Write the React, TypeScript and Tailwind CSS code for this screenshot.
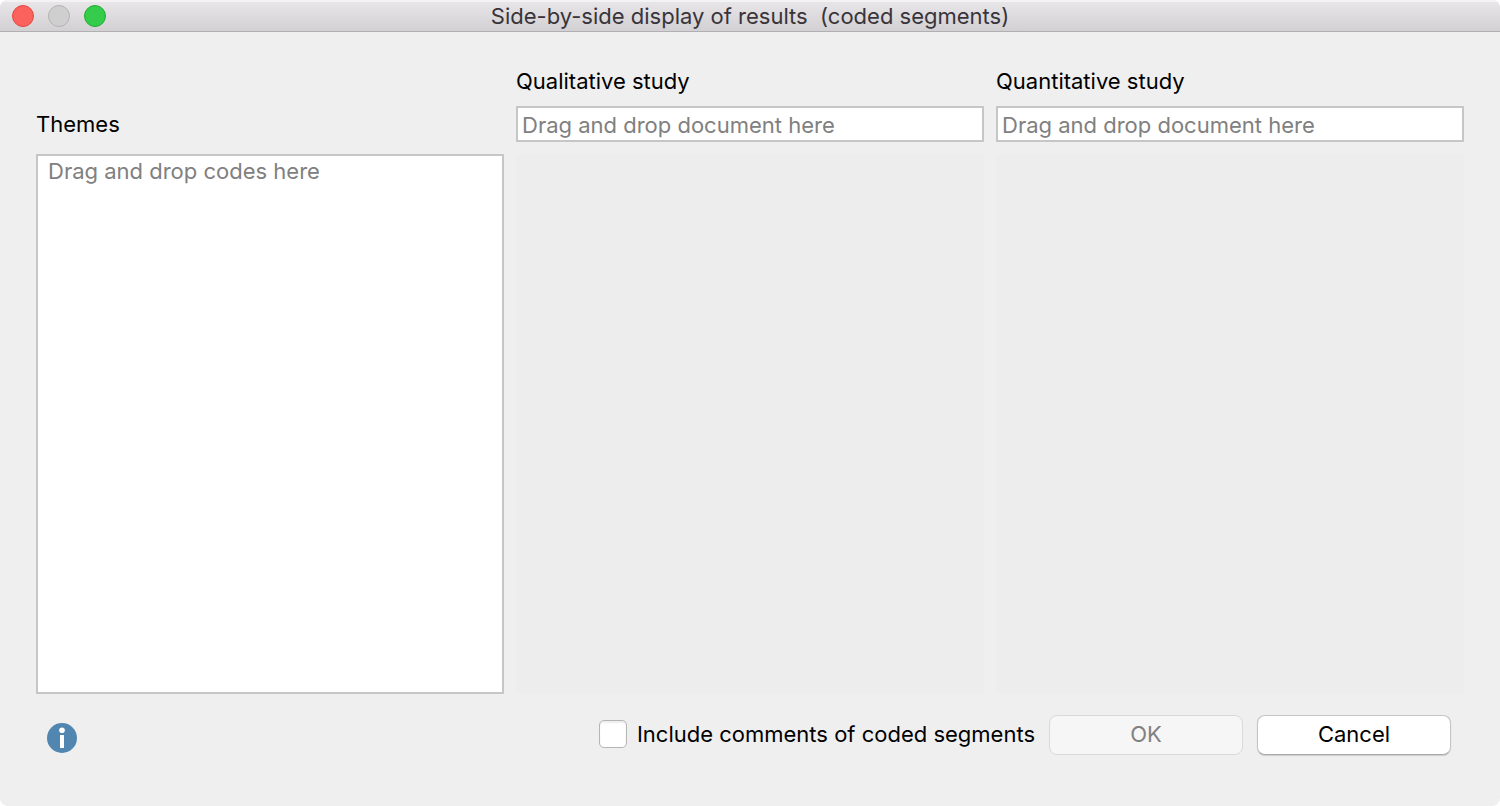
import React from "react";

function TitleBar({ title }: { title: string }) {
  return (
    <header className="relative flex h-8 items-center justify-center border-b border-[#b1afb1] bg-linear-to-b from-[#e9e7e9] to-[#d2d0d2] shadow-[inset_0_2px_0_#f4f3f4]">
      <div className="absolute left-3 flex gap-[14px]">
        <button aria-label="Close" className="size-[22px] rounded-full border border-[#e2463f] bg-[#fc625d]" />
        <button aria-label="Minimize" disabled className="size-[22px] rounded-full border border-[#b4b3b4] bg-[#d0cfd0]" />
        <button aria-label="Zoom" className="size-[22px] rounded-full border border-[#1fad30] bg-[#35cb4b]" />
      </div>
      <h1 className="whitespace-pre text-[#38343a]">{title}</h1>
    </header>
  );
}

function StudyColumn({ id, label }: { id: string; label: string }) {
  return (
    <section className="flex flex-col">
      <label htmlFor={id} className="mb-[10px] leading-[30px]">
        {label}
      </label>
      <input
        id={id}
        placeholder="Drag and drop document here"
        className="h-9 w-full border-2 border-[#c6c6c6] bg-white px-1 pt-[2px] outline-none placeholder:text-[#808080]"
      />
      <div className="mt-3 flex-1 bg-[#ededed]" />
    </section>
  );
}

function InfoIcon() {
  return (
    <svg viewBox="0 0 30 30" className="size-[30px]" aria-hidden="true">
      <circle cx="15" cy="15" r="15" fill="#5186b0" />
      <circle cx="15" cy="7.2" r="2.8" fill="#fff" />
      <rect x="13" y="12" width="4" height="13" fill="#fff" />
    </svg>
  );
}

export default function App() {
  return (
    <div className="min-h-screen bg-white font-['Inter',sans-serif] text-[22px] leading-7 text-black">
      <div className="flex min-h-screen flex-col overflow-hidden rounded-lg bg-[#efefef]">
        <TitleBar title="Side-by-side display of results  (coded segments)" />

        <main className="flex flex-1 flex-col px-9 pt-[34px]">
          <div className="grid flex-1 grid-cols-3 gap-3">
            <section className="flex flex-col gap-3 pt-10">
              <label htmlFor="themes" className="leading-9">
                Themes
              </label>
              <textarea
                id="themes"
                placeholder="Drag and drop codes here"
                className="w-full flex-1 resize-none border-2 border-[#c6c6c6] bg-white px-[10px] py-px outline-none placeholder:text-[#808080]"
              />
            </section>
            <StudyColumn id="qualitative" label="Qualitative study" />
            <StudyColumn id="quantitative" label="Quantitative study" />
          </div>

          <footer className="flex items-center pt-[21px] pr-[13px] pb-[51px] pl-[11px]">
            <button aria-label="Info" className="mt-[6px] mr-auto">
              <InfoIcon />
            </button>
            <label className="mr-[14px] flex items-center gap-[10px] pb-[2px]">
              <input
                type="checkbox"
                className="size-7 appearance-none rounded-[5px] border border-[#b5b5b5] bg-white shadow-[inset_0_2px_2px_#eeeeee]"
              />
              Include comments of coded segments
            </label>
            <div className="flex gap-[14px]">
              <button
                disabled
                className="h-10 w-[194px] rounded-lg border border-[#d9d9d9] bg-[#f6f6f6] pb-[2px] text-[#808080]"
              >
                OK
              </button>
              <button className="h-10 w-[194px] rounded-lg border border-[#c4c4c4] border-b-[#a9a9a9] bg-white pb-[2px] shadow-[0_1px_1px_#cccccc]">
                Cancel
              </button>
            </div>
          </footer>
        </main>
      </div>
    </div>
  );
}
